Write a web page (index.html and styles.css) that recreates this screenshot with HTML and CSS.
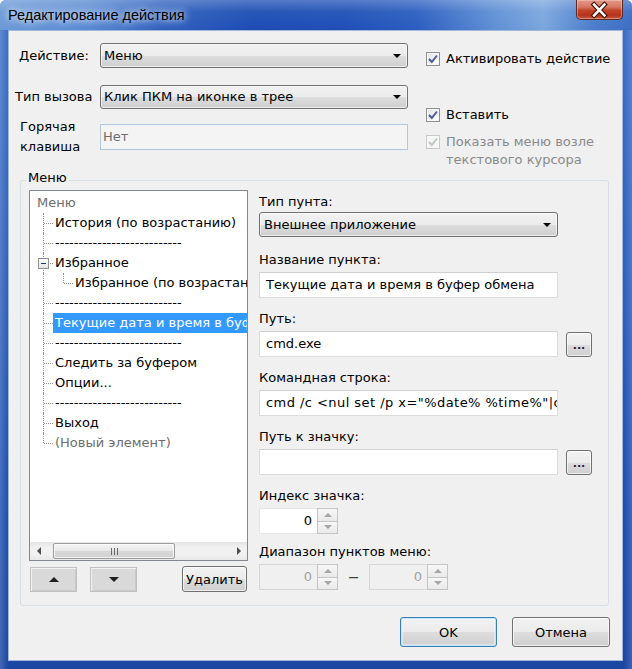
FILE: index.html
```html
<!DOCTYPE html>
<html lang="ru">
<head>
<meta charset="utf-8">
<title>Редактирование действия</title>
<link rel="stylesheet" href="styles.css">
</head>
<body>
<div class="window">
  <div class="titlebar">
    <span class="title">Редактирование действия</span>
    <span class="close">
      <svg width="47" height="20" viewBox="0 0 47 20">
        <path d="M18.5 4.5 L29 15.5 M29 4.5 L18.5 15.5" stroke="#4a1208" stroke-width="5" stroke-linecap="square" fill="none"/>
        <path d="M18.5 4.5 L29 15.5 M29 4.5 L18.5 15.5" stroke="#ffffff" stroke-width="2.6" stroke-linecap="square" fill="none"/>
      </svg>
    </span>
  </div>
  <div class="client">
    <div class="top">
      <div class="form">
        <div class="frow r1">
          <span class="lbl">Действие:</span>
          <div class="combo wide"><span class="ctext">Меню</span><i class="arrow"></i></div>
        </div>
        <div class="frow r2">
          <span class="lbl shift">Тип вызова</span>
          <div class="combo wide r2h"><span class="ctext">Клик ПКМ на иконке в трее</span><i class="arrow"></i></div>
        </div>
        <div class="frow r3">
          <span class="lbl two">Горячая<br>клавиша</span>
          <div class="hotkey">Нет</div>
        </div>
      </div>
      <div class="checks">
        <div class="chk c1"><span class="cb"><svg width="12" height="12" viewBox="0 0 12 12"><path d="M2 6 L4.8 9 L10 2.5" stroke="#4a5a96" stroke-width="2" fill="none"/></svg></span><span>Активировать действие</span></div>
        <div class="chk c2"><span class="cb"><svg width="12" height="12" viewBox="0 0 12 12"><path d="M2 6 L4.8 9 L10 2.5" stroke="#4a5a96" stroke-width="2" fill="none"/></svg></span><span>Вставить</span></div>
        <div class="chk c3 disabled"><span class="cb"><svg width="12" height="12" viewBox="0 0 12 12"><path d="M2 6 L4.8 9 L10 2.5" stroke="#c4c4c4" stroke-width="2" fill="none"/></svg></span><span>Показать меню возле<br>текстового курсора</span></div>
      </div>
    </div>

    <fieldset class="group">
      <legend>Меню</legend>
      <div class="gbody">
        <div class="leftcol">
          <div class="tree">
            <div class="items">
              <div class="row"><span class="tx gray">Меню</span></div>
              <div class="row child"><span class="ln"></span><span class="tx">История (по возрастанию)</span></div>
              <div class="row child"><span class="ln"></span><span class="tx">---------------------------</span></div>
              <div class="row child"><span class="ln"><span class="exp"></span></span><span class="tx">Избранное</span></div>
              <div class="row child"><span class="ln pass"></span><span class="ln last"></span><span class="tx">Избранное (по возрастанию)</span></div>
              <div class="row child"><span class="ln"></span><span class="tx">---------------------------</span></div>
              <div class="row child"><span class="ln"></span><span class="tx sel">Текущие дата и время в буфер обмена</span></div>
              <div class="row child"><span class="ln"></span><span class="tx">---------------------------</span></div>
              <div class="row child"><span class="ln"></span><span class="tx">Следить за буфером</span></div>
              <div class="row child"><span class="ln"></span><span class="tx">Опции...</span></div>
              <div class="row child"><span class="ln"></span><span class="tx">---------------------------</span></div>
              <div class="row child"><span class="ln"></span><span class="tx">Выход</span></div>
              <div class="row child"><span class="ln last"></span><span class="tx gray">(Новый элемент)</span></div>
            </div>
            <div class="hscroll">
              <span class="sarrow"><i class="tri-left"></i></span>
              <span class="thumb"><i class="grip"></i></span>
              <span class="strack"></span>
              <span class="sarrow"><i class="tri-right"></i></span>
            </div>
          </div>
          <div class="treebtns">
            <span class="tbtn"><i class="tri-up"></i></span>
            <span class="tbtn"><i class="tri-down"></i></span>
            <span class="btn del">Удалить</span>
          </div>
        </div>

        <div class="rightcol">
          <div class="flabel">Тип пунта:</div>
          <div class="combo field f-combo"><span class="ctext">Внешнее приложение</span><i class="arrow"></i></div>

          <div class="flabel sp15">Название пункта:</div>
          <div class="input field">Текущие дата и время в буфер обмена</div>

          <div class="flabel">Путь:</div>
          <div class="irow"><div class="input field">cmd.exe</div><span class="btn dots">...</span></div>

          <div class="flabel">Командная строка:</div>
          <div class="input field cmd">cmd /c &lt;nul set /p x="%date% %time%"|clip</div>

          <div class="flabel">Путь к значку:</div>
          <div class="irow"><div class="input field"></div><span class="btn dots">...</span></div>

          <div class="flabel">Индекс значка:</div>
          <div class="spin"><span class="sval">0</span><span class="sbtns"><i class="sup"></i><i class="sdn"></i></span></div>

          <div class="flabel sp10">Диапазон пунктов меню:</div>
          <div class="srow">
            <div class="spin off"><span class="sval">0</span><span class="sbtns"><i class="sup"></i><i class="sdn"></i></span></div>
            <span class="dash">—</span>
            <div class="spin off"><span class="sval">0</span><span class="sbtns"><i class="sup"></i><i class="sdn"></i></span></div>
          </div>
        </div>
      </div>
    </fieldset>

    <div class="dlgbtns">
      <span class="btn big default">OK</span>
      <span class="btn big cancel">Отмена</span>
    </div>
  </div>
</div>
</body>
</html>
```

FILE: styles.css
```css
html, body {
  margin: 0;
  padding: 0;
}
body {
  width: 632px;
  height: 669px;
  overflow: hidden;
  font-family: "DejaVu Sans", sans-serif;
  font-size: 13px;
  color: #000;
}
.window {
  width: 632px;
  height: 669px;
  box-sizing: border-box;
  display: flex;
  flex-direction: column;
  background:
    linear-gradient(90deg, rgba(255,255,255,0.18) 0px, rgba(255,255,255,0) 8px, rgba(255,255,255,0) 624px, rgba(255,255,255,0.15) 632px),
    linear-gradient(180deg, #3f70c7 0%, #2f61bd 40%, #1f4fb0 75%, #1b47a3 100%);
  border-radius: 6px 6px 0 0;
}
.titlebar {
  height: 30px;
  flex: none;
  display: flex;
  justify-content: space-between;
  align-items: flex-start;
  border-radius: 6px 6px 0 0;
  background:
    linear-gradient(180deg, rgba(255,255,255,0.25) 0px, rgba(255,255,255,0.05) 12px, rgba(255,255,255,0) 30px),
    linear-gradient(90deg, #6b9ad8 0%, #5789d2 14%, #2e60be 26%, #1c4db4 40%, #1f50b7 55%, #2b5ec0 66%, #5e8fd4 78%, #7ba6de 86%, #4a7cca 94%, #3b6dc4 100%);
}
.title {
  padding: 7px 0 0 8px;
  font-family: "Liberation Sans", Arial, sans-serif;
  font-size: 14.5px;
  line-height: 16px;
  color: #000;
  text-shadow: 0 0 6px rgba(255,255,255,0.95), 0 0 12px rgba(255,255,255,0.7);
}
.close {
  width: 47px;
  height: 20px;
  margin-right: 9px;
  border: 1px solid #5b2a27;
  border-top: none;
  border-radius: 0 0 5px 5px;
  box-sizing: border-box;
  background: linear-gradient(180deg, #e3998a 0%, #d67a66 35%, #c2432a 55%, #b5331d 80%, #cc5a3e 100%);
  box-shadow: inset 0 0 0 1px rgba(255,220,210,0.4);
  display: flex;
  justify-content: center;
}
.close svg {
  display: block;
  margin-left: -1px;
}

.client {
  flex: 1;
  margin: 0 9px 8px 8px;
  background: #f0f0f0;
  border: 1px solid #a3b8d6;
  display: flex;
  flex-direction: column;
}

/* top section */
.top {
  display: flex;
  align-items: flex-start;
  padding: 12px 0 0 10px;
}
.form {
  width: 389px;
}
.frow {
  display: flex;
  align-items: center;
}
.r2 { margin-top: 17px; }
.r3 { margin-top: 8px; }
.lbl {
  width: 81px;
  flex: none;
  line-height: 16px;
  white-space: nowrap;
}
.lbl.shift { margin-left: -4px; width: 85px; }
.lbl.two { line-height: 20px; margin-left: 1px; width: 80px; }

.combo {
  box-sizing: border-box;
  height: 25px;
  border: 1px solid #707070;
  border-radius: 3px;
  background: linear-gradient(180deg, #f2f2f2 0%, #ebebeb 50%, #dddddd 51%, #cfcfcf 100%);
  box-shadow: inset 0 0 0 1px rgba(255,255,255,0.6);
  display: flex;
  align-items: center;
  justify-content: space-between;
  padding: 0 6px 0 3px;
}
.combo.wide { width: 308px; }
.combo.r2h { height: 24px; }
.ctext { line-height: 16px; white-space: nowrap; }
.arrow {
  width: 0;
  height: 0;
  border-left: 4px solid transparent;
  border-right: 4px solid transparent;
  border-top: 4px solid #000;
}
.hotkey {
  box-sizing: border-box;
  width: 308px;
  height: 26px;
  border: 1px solid #b3c8dc;
  background: #f4f4f4;
  color: #6d6d6d;
  padding-left: 2px;
  line-height: 24px;
}

.checks {
  margin-left: 18px;
  padding-top: 7px;
}
.chk {
  display: flex;
  align-items: flex-start;
  line-height: 18px;
  white-space: nowrap;
}
.chk.c2 { margin-top: 38px; }
.chk.c3 { margin-top: 9px; }
.chk.disabled { color: #8a8a8a; }
.cb {
  flex: none;
  box-sizing: border-box;
  width: 14px;
  height: 14px;
  margin: 2px 6px 0 0;
  border: 1px solid #8e8f8f;
  background: linear-gradient(135deg, #e2e2e2 0%, #f4f4f4 60%, #ffffff 100%);
  box-shadow: inset 0 0 0 1px #f8f8f8;
  display: flex;
  align-items: center;
  justify-content: center;
}
.chk.disabled .cb {
  border-color: #c8c8c8;
  background: #f6f6f6;
}

/* group */
.group {
  margin: 1px 13px 0 11px;
  padding: 0 10px 13px 8px;
  border: 1px solid #d5dfe5;
  border-radius: 3px;
  min-width: 0;
}
.group legend {
  margin-left: -3px;
  padding: 0 2px 4px;
  line-height: 16px;
}
.gbody {
  display: flex;
  gap: 11px;
}
.leftcol {
  width: 219px;
  flex: none;
}
.tree {
  box-sizing: border-box;
  width: 219px;
  height: 371px;
  border: 1px solid #828790;
  background: #fff;
  display: flex;
  flex-direction: column;
}
.items {
  flex: 1;
  overflow: hidden;
  padding: 2px 0 0 5px;
}
.row {
  display: flex;
  height: 20px;
  line-height: 20px;
  white-space: nowrap;
}
.row.child { padding-left: 8px; }
.tx {
  padding: 0 2px;
  flex: none;
}
.tx.gray { color: #6d6d6d; }
.tx.sel { background: #3399ff; color: #fff; }
.ln {
  position: relative;
  width: 10px;
  height: 20px;
  flex: none;
}
.ln::before {
  content: "";
  position: absolute;
  left: 0;
  top: 0;
  bottom: 0;
  border-left: 1px dotted #8f8f8f;
}
.ln::after {
  content: "";
  position: absolute;
  left: 1px;
  right: 0;
  top: 10px;
  border-top: 1px dotted #8f8f8f;
}
.ln.last::before { bottom: 10px; }
.ln.pass { width: 20px; }
.ln.pass::after { display: none; }
.exp {
  position: absolute;
  z-index: 1;
  left: -5px;
  top: 5px;
  width: 9px;
  height: 9px;
  border: 1px solid #8c8e8f;
  background: linear-gradient(180deg, #ffffff 0%, #e4e4e4 100%);
}
.exp::after {
  content: "";
  position: absolute;
  left: 2px;
  top: 4px;
  width: 5px;
  height: 1px;
  background: #1e3287;
}

.hscroll {
  flex: none;
  height: 18px;
  display: flex;
  background: linear-gradient(180deg, #e4e4e4 0%, #f1f1f1 30%, #f1f1f1 70%, #e8e8e8 100%);
}
.sarrow {
  width: 17px;
  flex: none;
  display: flex;
  align-items: center;
  justify-content: center;
}
.tri-left {
  width: 0; height: 0;
  border-top: 4px solid transparent;
  border-bottom: 4px solid transparent;
  border-right: 4px solid #4d4d4d;
}
.tri-right {
  width: 0; height: 0;
  border-top: 4px solid transparent;
  border-bottom: 4px solid transparent;
  border-left: 4px solid #4d4d4d;
}
.thumb {
  box-sizing: border-box;
  width: 122px;
  margin: 1px 0 1px 6px;
  border: 1px solid #9c9c9c;
  border-radius: 2px;
  background: linear-gradient(180deg, #f3f3f3 0%, #e8e8e8 50%, #d8d8d8 51%, #d2d2d2 100%);
  box-shadow: inset 0 0 0 1px rgba(255,255,255,0.7);
  display: flex;
  align-items: center;
  justify-content: center;
}
.grip {
  width: 7px;
  height: 7px;
  background: repeating-linear-gradient(90deg, #6a6a6a 0 1px, transparent 1px 3px);
}
.strack { flex: 1; }

.treebtns {
  display: flex;
  margin-top: 5px;
  height: 26px;
  align-items: flex-end;
}
.tbtn {
  box-sizing: border-box;
  width: 47px;
  height: 25px;
  margin-left: 1px;
  border: 1px solid #c0c0c0;
  background: #d9d9d9;
  box-shadow: inset 1px 1px 0 #f2f2f2, inset -1px -1px 0 #c9c9c9;
  display: flex;
  align-items: center;
  justify-content: center;
}
.tbtn + .tbtn { margin-left: 13px; }
.tri-up {
  width: 0; height: 0;
  border-left: 5px solid transparent;
  border-right: 5px solid transparent;
  border-bottom: 5px solid #202020;
}
.tri-down {
  width: 0; height: 0;
  border-left: 5px solid transparent;
  border-right: 5px solid transparent;
  border-top: 5px solid #202020;
}
.btn {
  box-sizing: border-box;
  border: 1px solid #707070;
  border-radius: 3px;
  background: linear-gradient(180deg, #f2f2f2 0%, #ebebeb 50%, #dddddd 51%, #cfcfcf 100%);
  box-shadow: inset 0 0 0 1px rgba(255,255,255,0.65);
  display: flex;
  align-items: center;
  justify-content: center;
  white-space: nowrap;
}
.btn.del {
  width: 65px;
  height: 26px;
  margin-left: 45px;
}

/* right column */
.rightcol {
  padding-top: 4px;
  flex: 1;
}
.flabel {
  line-height: 16px;
  margin-top: 13px;
  white-space: nowrap;
}
.flabel:first-child { margin-top: 0; }
.flabel.sp15 { margin-top: 15px; }
.flabel.sp10 { margin-top: 10px; }
.field { width: 299px; }
.f-combo { margin-top: 2px; padding-left: 4px; }
.input {
  box-sizing: border-box;
  height: 26px;
  margin-top: 4px;
  border: 1px solid #dcdcdc;
  border-top-color: #d0d0d0;
  background: #fff;
  padding: 0 6px;
  line-height: 24px;
  white-space: nowrap;
  overflow: hidden;
}
.input.cmd { letter-spacing: 0.45px; }
.irow {
  display: flex;
  align-items: center;
  gap: 8px;
  margin-top: 4px;
}
.irow .input { margin-top: 0; flex: none; }
.btn.dots {
  width: 26px;
  height: 25px;
  font-weight: bold;
  font-size: 11px;
  line-height: 10px;
  align-items: flex-end;
  padding-bottom: 5px;
  color: #202040;
}
.spin {
  display: flex;
  width: 79px;
  height: 26px;
  margin-top: 4px;
}
.sval {
  flex: 1;
  box-sizing: border-box;
  background: #fff;
  border: 1px solid #e6e6e6;
  border-right: none;
  text-align: right;
  padding-right: 5px;
  line-height: 24px;
}
.sbtns {
  width: 21px;
  flex: none;
  display: flex;
  flex-direction: column;
}
.sbtns i {
  flex: 1;
  box-sizing: border-box;
  border: 1px solid #c4c4c4;
  background: linear-gradient(180deg, #f7f7f7 0%, #e9e9e9 100%);
  display: flex;
  align-items: center;
  justify-content: center;
}
.sbtns i + i { border-top: none; }
.sup::after {
  content: "";
  border-left: 4px solid transparent;
  border-right: 4px solid transparent;
  border-bottom: 4px solid #a6a6a6;
}
.sdn::after {
  content: "";
  border-left: 4px solid transparent;
  border-right: 4px solid transparent;
  border-top: 4px solid #a6a6a6;
}
.srow {
  display: flex;
  align-items: center;
  margin-top: 4px;
}
.srow .spin { margin-top: 0; }
.spin.off .sval {
  background: #f0f0f0;
  border-color: #d6d6d6;
  color: #a0a0a0;
}
.dash {
  width: 31px;
  text-align: center;
  color: #404040;
  font-size: 10px;
  font-weight: bold;
}

/* dialog buttons */
.dlgbtns {
  display: flex;
  justify-content: flex-end;
  gap: 15px;
  margin: 11px 12px 0 0;
}
.btn.big {
  height: 30px;
}
.btn.default {
  width: 97px;
  border-color: #3c7fb1;
  box-shadow: inset 0 0 0 1px #bfe4f9, inset 0 0 0 2px rgba(255,255,255,0.4);
}
.btn.cancel {
  width: 98px;
}
```
